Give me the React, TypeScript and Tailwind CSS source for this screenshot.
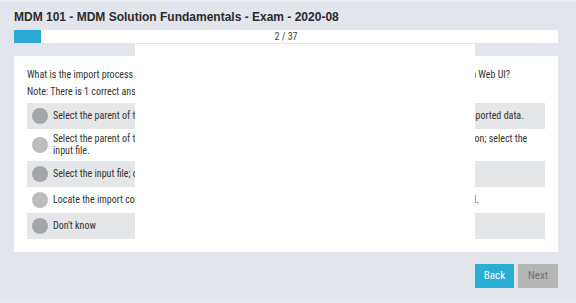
import React from "react";

const question =
  "What is the import process for a flat file that holds new data records for the business entity and its child objects in Web UI?";

const options = [
  "Select the parent of the entity; open the import dialog, map all of the source fields and then view the new imported data.",
  "Select the parent of the entity; click on the Import Data button in the upper toolbar of the main actions section; select the input file.",
  "Select the input file; open the import dialog and map each field.",
  "Locate the import command in the menu of the application, then select the target entity, and the data model.",
  "Don't know",
];

export default function App() {
  return (
    <div className="relative h-[303px] w-[576px] overflow-hidden bg-[#e3e5ec] font-['Roboto_Condensed',sans-serif] text-[#333]">
      <div className="h-[2px] bg-[#eceef2]" />
      <div className="ml-[14px] w-[544px]">
        <div className="h-[28px] pt-[7px] font-['Liberation_Sans',Arial,sans-serif] text-[12px] font-bold leading-[16px] text-[#2b2b2b]">
          MDM 101 - MDM Solution Fundamentals - Exam - 2020-08
        </div>

        <div className="relative flex h-[13px] bg-white">
          <div className="h-full w-[27px] bg-[#2aaad3]" />
          <div className="absolute inset-0 flex items-center justify-center text-[10px] leading-none text-[#444]">
            2 / 37
          </div>
        </div>

        <div className="mt-[13px] h-[196px] bg-white px-[13px] pt-[13px] text-[10px] leading-[12px]">
          <p>{question}</p>
          <p className="mt-[5px]">Note: There is 1 correct answer to this question.</p>

          <div className="mt-[5px] flex flex-col">
            {options.map((text, i) => {
              const shaded = i % 2 === 0;
              return (
                <div
                  key={i}
                  className={`flex min-h-[26px] items-center gap-[5px] py-1 pl-[5px] pr-[5px] ${shaded ? "bg-[#e5e6e8]" : ""}`}
                >
                  <div
                    className={`h-4 w-4 shrink-0 rounded-full ${shaded ? "bg-[#a4a6a9]" : "bg-[#bdbdbd]"}`}
                  />
                  <span>{text}</span>
                </div>
              );
            })}
          </div>
        </div>

        <div className="mt-[12px] flex justify-end gap-[4px]">
          <button className="h-[24px] w-[39px] bg-[#29aed6] text-[11px] text-white">Back</button>
          <button className="h-[24px] w-[40px] bg-[#b5b5b5] text-[11px] text-[#707070]">Next</button>
        </div>
      </div>

      <div className="absolute left-[135px] top-[44px] h-[208px] w-[340px] bg-white" />
      <div className="absolute bottom-0 left-0 h-[6px] w-full bg-[#e8eaef]" />
    </div>
  );
}
